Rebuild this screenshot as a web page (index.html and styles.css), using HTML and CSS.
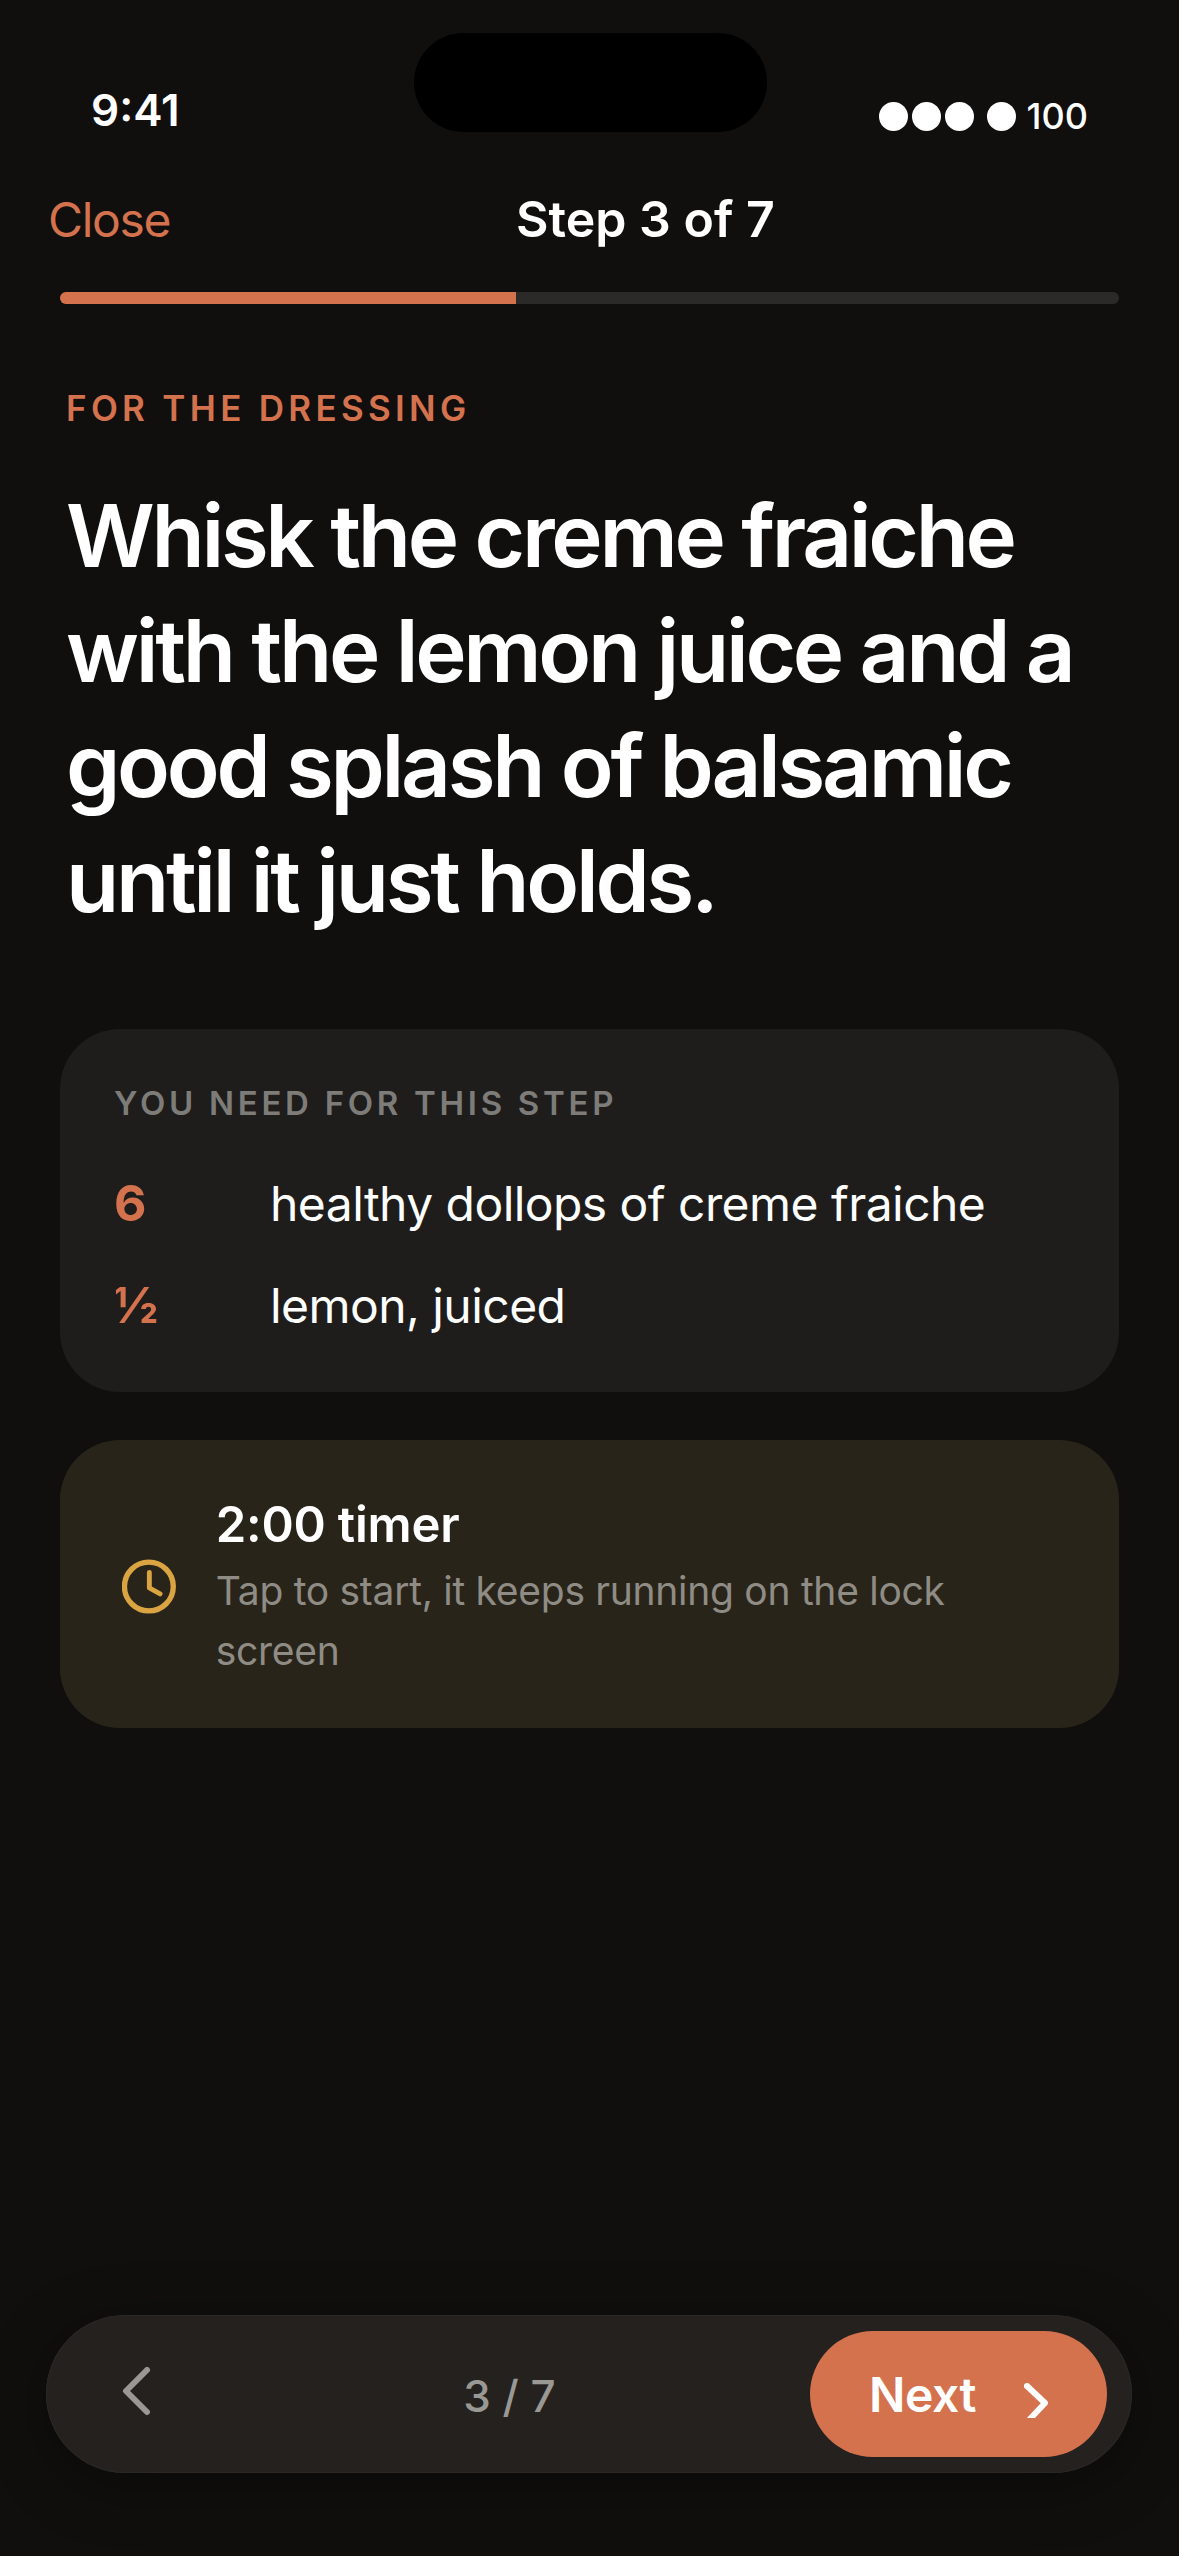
FILE: index.html
```html
<!doctype html>
<html>
    <head>
        <link rel="stylesheet" href="styles.css">
    </head>
    <body>
        <div class="screen">
            <div class="island"></div>
            <div class="status">
                <span class="time">9:41</span>
                <div class="signal">
                    <i></i><i></i><i></i><i class="wifi"></i>
                    <span>100</span>
                </div>
            </div>
            <div class="topbar">
                <span class="close">Close</span>
                <span class="title">Step 3 of 7</span>
            </div>
            <div class="progress"><div class="fill"></div></div>

            <div class="eyebrow">FOR THE DRESSING</div>
            <h1>Whisk the creme fraiche with the lemon juice and a good splash of balsamic until it just holds.</h1>

            <div class="card">
                <div class="card-label">YOU NEED FOR THIS STEP</div>
                <div class="row">
                    <span class="qty">6</span>
                    <span>healthy dollops of creme fraiche</span>
                </div>
                <div class="row">
                    <span class="qty">½</span>
                    <span>lemon, juiced</span>
                </div>
            </div>

            <div class="timer">
                <svg class="clock" viewBox="0 0 55 55" width="55" height="55">
                    <circle cx="27.5" cy="27.5" r="25" fill="none" stroke="#d9a441" stroke-width="5.5"/>
                    <path d="M28 13V29L39 35" fill="none" stroke="#d9a441" stroke-width="5" stroke-linecap="round" stroke-linejoin="round"/>
                </svg>
                <div class="timer-text">
                    <div class="timer-title">2:00 timer</div>
                    <div class="timer-sub">Tap to start, it keeps running on the lock screen</div>
                </div>
            </div>

            <div class="nav">
                <svg class="back" viewBox="0 0 30 54" width="30" height="54">
                    <path d="M25 3L4 24L25 45" fill="none" stroke="#9a9894" stroke-width="6" stroke-linecap="round" stroke-linejoin="round"/>
                </svg>
                <span class="count">3 / 7</span>
                <div class="next">
                    <span>Next</span>
                    <svg viewBox="0 0 24 35" width="24" height="35">
                        <path d="M3 3L21 20L5 37" fill="none" stroke="#fff" stroke-width="6" stroke-linecap="round" stroke-linejoin="round"/>
                    </svg>
                </div>
            </div>
        </div>
    </body>
</html>
```

FILE: styles.css
```css
* {
    box-sizing: border-box;
}
body {
    margin: 0;
    background-color: #100f0e;
    font-family: Inter, "Liberation Sans", sans-serif;
    color: #fff;
}
.screen {
    width: 1179px;
    height: 2556px;
    position: relative;
    overflow: hidden;
    display: flex;
    flex-direction: column;
    padding: 0 60px;
}
.island {
    position: absolute;
    top: 33px;
    left: 414px;
    width: 353px;
    height: 99px;
    background-color: #000;
    border-radius: 50px;
}
.status {
    display: flex;
    justify-content: space-between;
    align-items: center;
    height: 60px;
    margin: 80px 0 0;
    padding: 0 0 0 31px;
}
.time {
    font-size: 44px;
    font-weight: 600;
}
.signal {
    display: flex;
    align-items: center;
    gap: 4px;
    margin: 12px 31px 0 0;
}
.signal > i {
    width: 29px;
    height: 29px;
    border-radius: 50%;
    background-color: #fff;
}
.signal > .wifi {
    margin-left: 9px;
}
.signal > span {
    font-size: 36px;
    font-weight: 500;
    margin-left: 7px;
}
.topbar {
    height: 70px;
    margin: 44px 0 0 -12px;
    display: flex;
    align-items: center;
    position: relative;
}
.close {
    font-size: 48px;
    letter-spacing: -1.3px;
    color: #d4724e;
    width: 468px;
}
.title {
    font-size: 50px;
    font-weight: 600;
}
.progress {
    height: 12px;
    margin-top: 38px;
    background-color: #2c2a28;
    border-radius: 6px;
    overflow: hidden;
}
.fill {
    width: 456px;
    height: 12px;
    background-color: #d4724e;
}
.eyebrow {
    margin: 83px 0 0 6px;
    font-size: 35px;
    font-weight: 600;
    letter-spacing: 4.3px;
    color: #d4724e;
}
h1 {
    margin: 49px 0 0 6px;
    font-size: 87px;
    line-height: 115px;
    font-weight: 600;
    letter-spacing: -3.3px;
    width: 1060px;
}
.card {
    margin-top: 91px;
    padding: 54px 54px 36px;
    background-color: #1e1d1c;
    border-radius: 60px;
}
.card-label {
    font-size: 33px;
    font-weight: 600;
    letter-spacing: 3.7px;
    color: #7d7c79;
    margin-bottom: 29px;
}
.row {
    display: flex;
    align-items: center;
    height: 102px;
    font-size: 48px;
    letter-spacing: -0.55px;
}
.qty {
    width: 156px;
    font-size: 50px;
    font-weight: 700;
    color: #d4724e;
}
.timer {
    margin-top: 48px;
    padding: 7px 60px 0 62px;
    background-color: #29241a;
    border-radius: 60px;
    display: flex;
    align-items: center;
    gap: 40px;
    height: 288px;
}
.clock {
    margin-top: -2px;
}
.timer-title {
    font-size: 49px;
    font-weight: 600;
    letter-spacing: -0.2px;
}
.timer-sub {
    margin-top: 7px;
    font-size: 39px;
    line-height: 60px;
    color: #8f8c85;
    letter-spacing: -0.28px;
}
.nav {
    position: absolute;
    left: 46px;
    top: 2315px;
    width: 1086px;
    height: 158px;
    background-color: #24211e;
    border-radius: 79px;
    box-shadow: 0 12px 60px rgba(0, 0, 0, 0.35), inset 0 0 0 1px #2a2825;
    display: flex;
    align-items: center;
    justify-content: space-between;
    padding: 0 25px 0 76px;
}
.count {
    font-size: 44px;
    font-weight: 500;
    color: #9a9894;
    margin: 3px 0 0 57px;
}
.next {
    width: 297px;
    height: 126px;
    border-radius: 63px;
    background-color: #d4724e;
    display: flex;
    align-items: center;
    justify-content: center;
    gap: 48px;
    font-size: 48px;
    font-weight: 600;
    letter-spacing: -0.5px;
}
.next > svg {
    margin-top: 13px;
}
```
